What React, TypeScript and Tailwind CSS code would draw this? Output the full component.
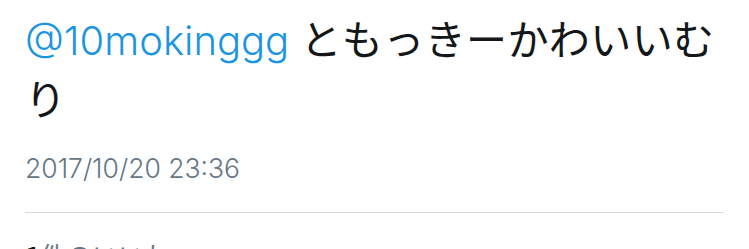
export default function App() {
  return (
    <div className="w-[749px] h-[249px] overflow-hidden bg-white px-[25px] pt-[9px] font-['Inter','Noto_Sans_CJK_JP',sans-serif]">
      <p className="text-[40px] leading-[57px] font-light text-[#14171a]">
        <span className="text-[#1b95e0]">@10mokinggg</span>{" "}
        <span className="font-['Noto_Sans_CJK_JP',sans-serif] font-normal text-[41px] tracking-[0.4px]">ともっきーかわいいむり</span>
      </p>
      <p className="mt-[22px] text-[26.5px] leading-[34px] font-light text-[#657786]">
        2017/10/20 23:36
      </p>
      <div className="mt-[27px] h-px bg-[#d6dade]" />
      <p className="mt-[26px] text-[26px] leading-[32px] text-[#657786] font-['Noto_Sans_CJK_JP',sans-serif]">
        <span className="font-bold text-[#14171a]">1</span>件のいいね
      </p>
    </div>
  )
}
